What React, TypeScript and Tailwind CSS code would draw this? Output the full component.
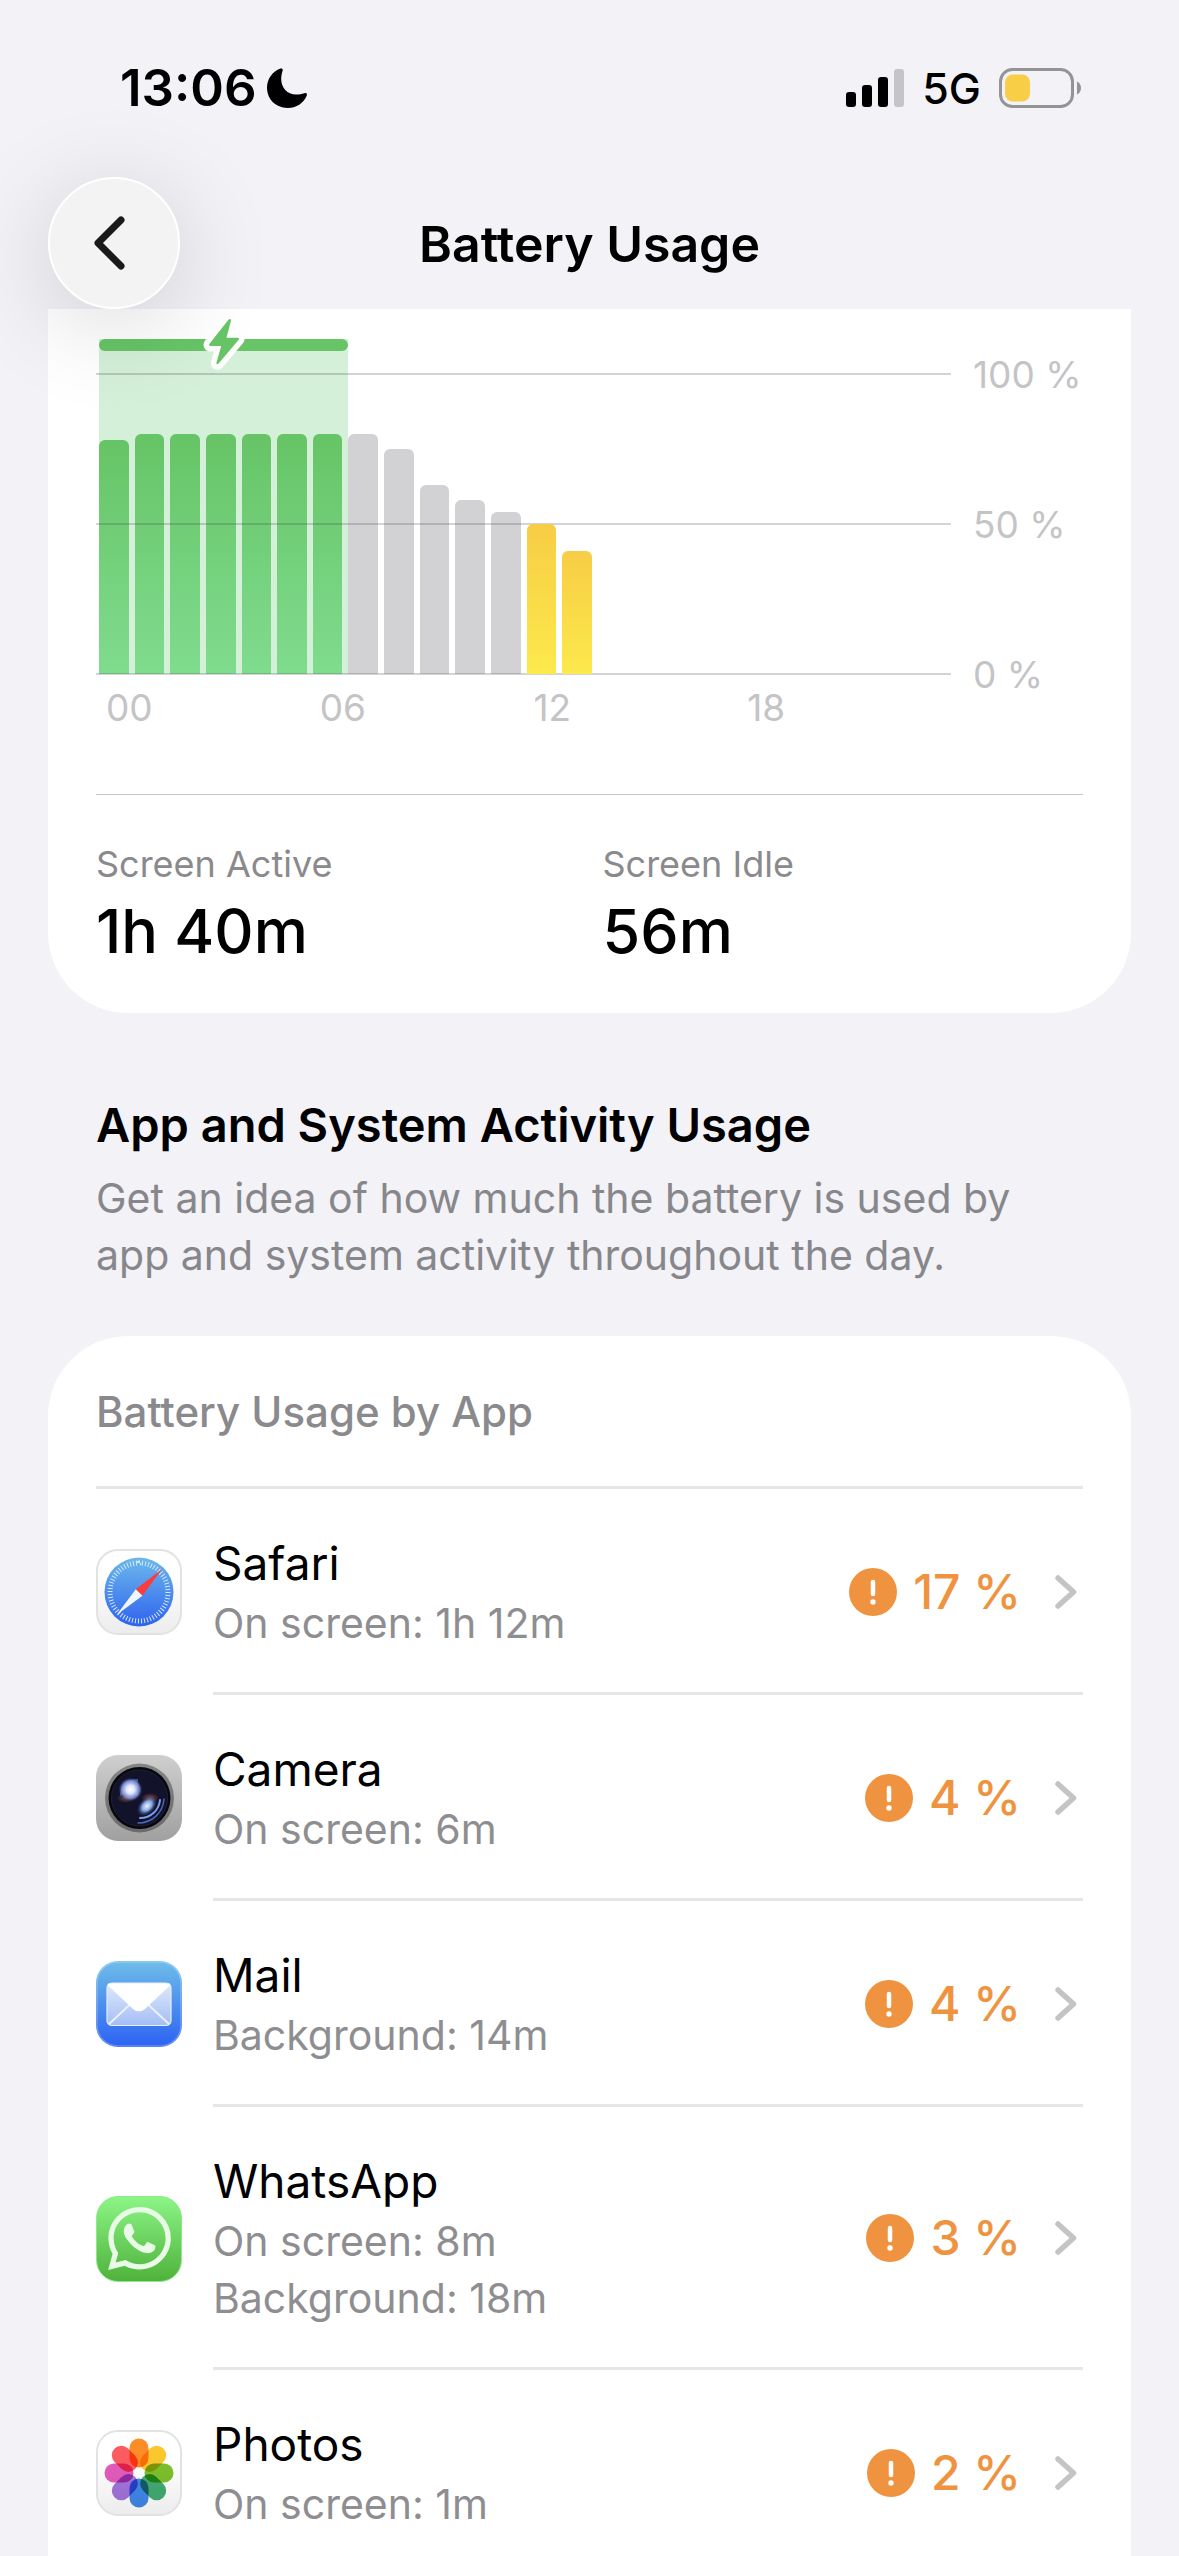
import React from 'react';
import { SiWhatsapp } from 'react-icons/si';

type Level = 'charging' | 'normal' | 'lowPower';

interface HourUsage {
  hour: number;
  percent: number;
  level: Level;
}

interface AppUsage {
  name: string;
  details: string[];
  percent: number;
  icon: React.ReactNode;
}

const HOURS_PER_DAY = 24;

const hours: HourUsage[] = [
  { hour: 0, percent: 78, level: 'charging' },
  { hour: 1, percent: 80, level: 'charging' },
  { hour: 2, percent: 80, level: 'charging' },
  { hour: 3, percent: 80, level: 'charging' },
  { hour: 4, percent: 80, level: 'charging' },
  { hour: 5, percent: 80, level: 'charging' },
  { hour: 6, percent: 80, level: 'charging' },
  { hour: 7, percent: 80, level: 'normal' },
  { hour: 8, percent: 75, level: 'normal' },
  { hour: 9, percent: 63, level: 'normal' },
  { hour: 10, percent: 58, level: 'normal' },
  { hour: 11, percent: 54, level: 'normal' },
  { hour: 12, percent: 50, level: 'lowPower' },
  { hour: 13, percent: 41, level: 'lowPower' },
];

const barColors: Record<Level, string> = {
  charging: 'bg-linear-to-b from-[#66c466] to-[#80dc8e]',
  normal: 'bg-[#d2d2d4]',
  lowPower: 'bg-linear-to-b from-[#f7cd45] to-[#fce94c] z-20',
};

const SafariIcon = () => (
  <svg viewBox="0 0 86 86" className="size-[86px]" aria-hidden="true">
    <defs>
      <linearGradient id="tile-light" x1="0" y1="0" x2="0" y2="1">
        <stop offset="0.3" stopColor="#ffffff" />
        <stop offset="1" stopColor="#ececec" />
      </linearGradient>
      <linearGradient id="safari-dial" x1="0" y1="0" x2="0" y2="1">
        <stop offset="0" stopColor="#6cb9ea" />
        <stop offset="1" stopColor="#2f62f0" />
      </linearGradient>
    </defs>
    <rect x="1" y="1" width="84" height="84" rx="21" fill="url(#tile-light)" stroke="#e2e2e3" strokeWidth="2" />
    <circle cx="43" cy="43" r="34.5" fill="url(#safari-dial)" />
    <circle cx="43" cy="43" r="29" fill="none" stroke="#d4e8fb" strokeWidth="5" pathLength={180} strokeDasharray="1 2" />
    <path d="M66 20 39.8 40.2l6.6 6.6z" fill="#fb3b3c" />
    <path d="M20.5 66 39.8 40.2l6.6 6.6z" fill="#f1f6fd" />
  </svg>
);

const CameraIcon = () => (
  <svg viewBox="0 0 86 86" className="size-[86px]" aria-hidden="true">
    <defs>
      <linearGradient id="camera-body" x1="0" y1="0" x2="0" y2="1">
        <stop offset="0" stopColor="#cfcfcf" />
        <stop offset="1" stopColor="#a0a0a0" />
      </linearGradient>
      <linearGradient id="camera-ring" x1="0" y1="0" x2="0" y2="1">
        <stop offset="0" stopColor="#858585" />
        <stop offset="1" stopColor="#6b6b6d" />
      </linearGradient>
      <radialGradient id="camera-glow">
        <stop offset="0" stopColor="#ffffff" />
        <stop offset="0.35" stopColor="#dfe5ff" />
        <stop offset="0.75" stopColor="#8296e0" stopOpacity="0.8" />
        <stop offset="1" stopColor="#2c3878" stopOpacity="0" />
      </radialGradient>
      <radialGradient id="camera-glow-low">
        <stop offset="0" stopColor="#f5f3ff" />
        <stop offset="0.5" stopColor="#8fb4f2" stopOpacity="0.9" />
        <stop offset="1" stopColor="#16307a" stopOpacity="0" />
      </radialGradient>
      <radialGradient id="camera-warm">
        <stop offset="0" stopColor="#a05a4c" stopOpacity="0.8" />
        <stop offset="1" stopColor="#a05a4c" stopOpacity="0" />
      </radialGradient>
    </defs>
    <rect width="86" height="86" rx="22" fill="url(#camera-body)" />
    <circle cx="43.5" cy="43" r="34.5" fill="url(#camera-ring)" />
    <circle cx="43.5" cy="43" r="31" fill="#07080f" />
    <circle cx="43.5" cy="43" r="28" fill="#12132a" stroke="#1f2030" strokeWidth="1" />
    <ellipse cx="30" cy="43" rx="9" ry="5" fill="url(#camera-warm)" />
    <ellipse cx="54" cy="43" rx="9" ry="5" fill="url(#camera-warm)" />
    <path d="M24 41c0-10 7-17 18-17 0 6-1 10 0 17-6-3-12-3-18 0z" fill="#6577c8" opacity="0.7" />
    <circle cx="34.5" cy="34.5" r="12" fill="url(#camera-glow)" />
    <ellipse cx="51" cy="51" rx="12" ry="8" transform="rotate(-45 51 51)" fill="url(#camera-glow-low)" />
    <path d="M44 63c11 0 19-8 20-18" fill="none" stroke="#7f9bec" strokeWidth="2" strokeLinecap="round" />
    <path d="M42 68c15 0 25-11 26-24" fill="none" stroke="#4a66b8" strokeWidth="1.5" strokeLinecap="round" />
  </svg>
);

const MailIcon = () => (
  <svg viewBox="0 0 86 86" className="size-[86px]" aria-hidden="true">
    <defs>
      <linearGradient id="mail-tile" x1="0" y1="0" x2="0" y2="1">
        <stop offset="0" stopColor="#6fbdea" />
        <stop offset="1" stopColor="#2c62f2" />
      </linearGradient>
      <linearGradient id="mail-paper" x1="0" y1="0" x2="0" y2="1">
        <stop offset="0" stopColor="#dfeafa" />
        <stop offset="1" stopColor="#a4bdf5" />
      </linearGradient>
    </defs>
    <rect width="86" height="86" rx="22" fill="url(#mail-tile)" />
    <rect x="1" y="1" width="84" height="84" rx="21" fill="none" stroke="#ffffff" strokeOpacity="0.25" strokeWidth="1.5" />
    <rect x="11" y="22" width="64" height="42.5" rx="5" fill="url(#mail-paper)" stroke="#e3eefe" strokeWidth="1.2" />
    <path d="M13 63 34 43.5M73 63 52 43.5" stroke="#eaf3ff" strokeWidth="1.8" fill="none" />
    <path d="M12.5 22.5h61c.8.6.8 1.6 0 2.4L49.5 47.5c-4 3.8-9 3.8-13 0L12.5 24.9c-.8-.8-.8-1.8 0-2.4z" fill="#ffffff" />
  </svg>
);

const WhatsAppIcon = () => (
  <div className="flex size-[86px] items-center justify-center rounded-[22px] border border-[#8fe88b] bg-linear-to-b from-[#8bf585] to-[#4fb33a]">
    <SiWhatsapp size={63} color="#e9fbe6" aria-hidden="true" />
  </div>
);

const petals = [
  { angle: 0, color: '#fc8c25' },
  { angle: 45, color: '#fbc72e' },
  { angle: 90, color: '#7dc02c' },
  { angle: 135, color: '#43ab72' },
  { angle: 180, color: '#4088ea' },
  { angle: 225, color: '#a274dc' },
  { angle: 270, color: '#e45bbd' },
  { angle: 315, color: '#fb5c62' },
];

const PhotosIcon = () => (
  <svg viewBox="0 0 86 86" className="isolate size-[86px]" aria-hidden="true">
    <rect x="1" y="1" width="84" height="84" rx="21" fill="url(#tile-light)" stroke="#e2e2e3" strokeWidth="2" />
    {petals.map(petal => (
      <rect
        key={petal.angle}
        x="33.5"
        y="8.5"
        width="19"
        height="29"
        rx="9.5"
        fill={petal.color}
        transform={`rotate(${petal.angle} 43 43)`}
        className="mix-blend-multiply"
      />
    ))}
  </svg>
);

const apps: AppUsage[] = [
  { name: 'Safari', details: ['On screen: 1h 12m'], percent: 17, icon: <SafariIcon /> },
  { name: 'Camera', details: ['On screen: 6m'], percent: 4, icon: <CameraIcon /> },
  { name: 'Mail', details: ['Background: 14m'], percent: 4, icon: <MailIcon /> },
  { name: 'WhatsApp', details: ['On screen: 8m', 'Background: 18m'], percent: 3, icon: <WhatsAppIcon /> },
  { name: 'Photos', details: ['On screen: 1m'], percent: 2, icon: <PhotosIcon /> },
];

const StatusBar = () => (
  <div className="flex h-[177px] items-center justify-between pr-[98px] pb-[2px] pl-[120px]">
    <div className="flex items-center gap-[10px]">
      <span className="text-[51px] leading-[60px] font-semibold">13:06</span>
      <svg viewBox="0 0 40 40" className="size-10" aria-hidden="true">
        <path d="M13.5.6C15 0 16.2 1.2 15.6 2.8 14.6 5.6 14.2 8.6 14.2 11c0 8.6 6 15.6 14.8 15.6 3 0 5.800-.6 8.400-1.400 2-.6 3 .8 2.400 2.200C36.600 35 29.400 40 20.600 40 9 40 0 31.400 0 19.600 0 11.200 5.400 3.600 13.500.6z" />
      </svg>
    </div>
    <div className="flex items-center gap-[18px]">
      <svg viewBox="0 0 58 38" className="h-[38px] w-[58px]" aria-hidden="true">
        <rect x="0" y="23" width="10" height="15" rx="3" />
        <rect x="16" y="16" width="10" height="22" rx="3" />
        <rect x="32" y="8" width="10" height="30" rx="3" />
        <rect x="48" y="0" width="10" height="38" rx="3" fill="#c4c4c9" />
      </svg>
      <span className="text-[43px] leading-[50px] font-medium">5G</span>
      <svg viewBox="0 0 82 40" className="h-10 w-[82px]" aria-hidden="true">
        <rect x="1.5" y="1.5" width="72" height="37" rx="12" fill="none" stroke="#949497" strokeWidth="3" />
        <rect x="6" y="6.5" width="25" height="27" rx="8" fill="#f7ce45" />
        <path d="M78 13.5c2.5 1 4 3.5 4 6.5s-1.5 5.5-4 6.5z" fill="#949497" />
      </svg>
    </div>
  </div>
);

const Header = () => (
  <header className="sticky top-0 z-30 bg-[#f2f2f7]">
    <StatusBar />
    <div className="grid grid-cols-[132px_1fr_132px] items-center px-12">
      <button
        type="button"
        aria-label="Back"
        className="flex size-[132px] items-center justify-center rounded-full border-2 border-white bg-[#f3f3f3] pr-2 shadow-[0_16px_100px_rgba(0,0,0,0.16)]"
      >
        <svg viewBox="0 0 32 54" className="h-[54px] w-8" fill="none" aria-hidden="true">
          <path d="M27 4 4 27 27 50" stroke="#1a1a1a" strokeWidth="7" strokeLinecap="round" strokeLinejoin="round" />
        </svg>
      </button>
      <h1 className="pt-[2px] text-center text-[50px] leading-[60px] font-semibold">Battery Usage</h1>
    </div>
  </header>
);

const ChargingBand = () => {
  const chargingHours = hours.filter(h => h.level === 'charging').length;

  return (
    <div
      className="absolute inset-y-0 left-[3px] bg-[#d4f0d8]"
      style={{ width: `${(chargingHours / HOURS_PER_DAY) * 100}%` }}
    >
      <div className="flex h-3 items-center justify-center rounded-full bg-[#67c567]">
        <svg viewBox="0 5 48 64" className="h-16 w-12 shrink-0" aria-hidden="true">
          <path
            d="M31 12.5 26.5 29.7h11.2c1.3 0 1.7 1.1 1 2.1L18.6 55.5c-1.2 1.3-2.5.6-2.1-1L21.2 38H10.5c-1.4 0-1.9-1.2-1-2.3L28.7 11.6c1.1-1.3 2.7-.7 2.3.9z"
            fill="#67c567"
            stroke="#ffffff"
            strokeWidth="11"
            strokeLinejoin="round"
            paintOrder="stroke"
          />
        </svg>
      </div>
    </div>
  );
};

const BatteryChart = () => (
  <div className="flex">
    <div className="flex-1">
      <div className="relative h-[335px] pt-[35px]">
        <ChargingBand />
        <div className="relative flex h-full items-end">
          {Array.from({ length: HOURS_PER_DAY }, (_, hour) => {
            const usage = hours.find(h => h.hour === hour);
            return (
              <div key={hour} className="flex h-full flex-1 items-end px-[3px]">
                {usage && (
                  <div
                    className={`relative w-full rounded-t-md ${barColors[usage.level]}`}
                    style={{ height: `${usage.percent}%` }}
                  />
                )}
              </div>
            );
          })}
          {/* grid lines run over the green and grey bars, but under the yellow ones */}
          <div className="absolute inset-x-0 -inset-y-px z-10 flex flex-col justify-between">
            <div className="h-[2px] bg-[#3c3c43]/22" />
            <div className="h-[2px] bg-[#3c3c43]/22" />
            <div className="h-[2px] bg-[#3c3c43]/22" />
          </div>
        </div>
      </div>
      <div className="mt-3 grid grid-cols-4 text-[37px] leading-[44px] text-[#c4c4c6]">
        {['00', '06', '12', '18'].map(label => (
          <span key={label} className="pl-[10px]">{label}</span>
        ))}
      </div>
    </div>
    <div className="flex h-[358px] w-[132px] flex-col justify-between pt-[14px] pl-[22px] text-[37px] leading-[44px] whitespace-nowrap text-[#c4c4c6]">
      <span>100 %</span>
      <span>50 %</span>
      <span>0 %</span>
    </div>
  </div>
);

const Stat = ({ label, value }: { label: string; value: string }) => (
  <div>
    <dt className="text-[36px] leading-[44px] text-[#8a8a8d]">{label}</dt>
    <dd className="mt-2 text-[61px] leading-[74px] font-medium">{value}</dd>
  </div>
);

const AppRow = ({ app, isLast }: { app: AppUsage; isLast: boolean }) => (
  <li>
    <a href="#" className="flex items-stretch">
      <div className="flex w-[117px] shrink-0 items-center">{app.icon}</div>
      <div className={`flex flex-1 items-center justify-between border-b-[3px] pt-[42px] pb-10 ${isLast ? 'border-transparent' : 'border-[#e6e6e6]'}`}>
        <div>
          <div className="text-[46px] leading-[64px]">{app.name}</div>
          {app.details.map(detail => (
            <div key={detail} className="text-[41px] leading-[57px] text-[#8e8e91]">{detail}</div>
          ))}
        </div>
        <div className="flex items-center text-[#ef9340]">
          <svg viewBox="0 0 48 48" className="size-12" aria-hidden="true">
            <circle cx="24" cy="24" r="24" fill="currentColor" />
            <path d="M24 14v12" stroke="#ffffff" strokeWidth="4.5" strokeLinecap="round" />
            <circle cx="24" cy="34" r="2.7" fill="#ffffff" />
          </svg>
          <span className="ml-4 text-[48px] leading-[60px] font-medium">{app.percent} %</span>
          <svg viewBox="0 0 22 34" className="mr-[6px] ml-[34px] h-[34px] w-[22px]" fill="none" aria-hidden="true">
            <path d="M3 3l15.5 14L3 31" stroke="#c4c4c6" strokeWidth="5.5" strokeLinecap="round" strokeLinejoin="round" />
          </svg>
        </div>
      </div>
    </a>
  </li>
);

export default function App() {
  return (
    <div className="h-screen overflow-y-auto bg-[#f2f2f7] font-['Inter',sans-serif] text-black [scrollbar-width:none]">
      <Header />

      <main className="px-12">
        <section className="rounded-b-[80px] bg-white px-12 pt-[30px] pb-[45px]">
          <BatteryChart />
          <dl className="mt-16 grid grid-cols-2 gap-[26px] border-t border-[#c6c6c8] pt-[47px]">
            <Stat label="Screen Active" value="1h 40m" />
            <Stat label="Screen Idle" value="56m" />
          </dl>
        </section>

        <section className="px-12 pt-[83px]">
          <h2 className="text-[47px] leading-[58px] font-semibold">App and System Activity Usage</h2>
          <p className="mt-4 text-[41px] leading-[57px] text-[#87878b]">
            Get an idea of how much the battery is used by app and system activity throughout the day.
          </p>
        </section>

        <section className="mt-[52px] rounded-t-[80px] bg-white px-12 pt-[47px]">
          <h3 className="border-b-[3px] border-[#e6e6e6] pb-[46px] text-[42px] leading-[57px] font-medium text-[#8a8a8d]">
            Battery Usage by App
          </h3>
          <ul>
            {apps.map((app, idx) => (
              <AppRow key={app.name} app={app} isLast={idx === apps.length - 1} />
            ))}
          </ul>
        </section>
      </main>
    </div>
  );
}
